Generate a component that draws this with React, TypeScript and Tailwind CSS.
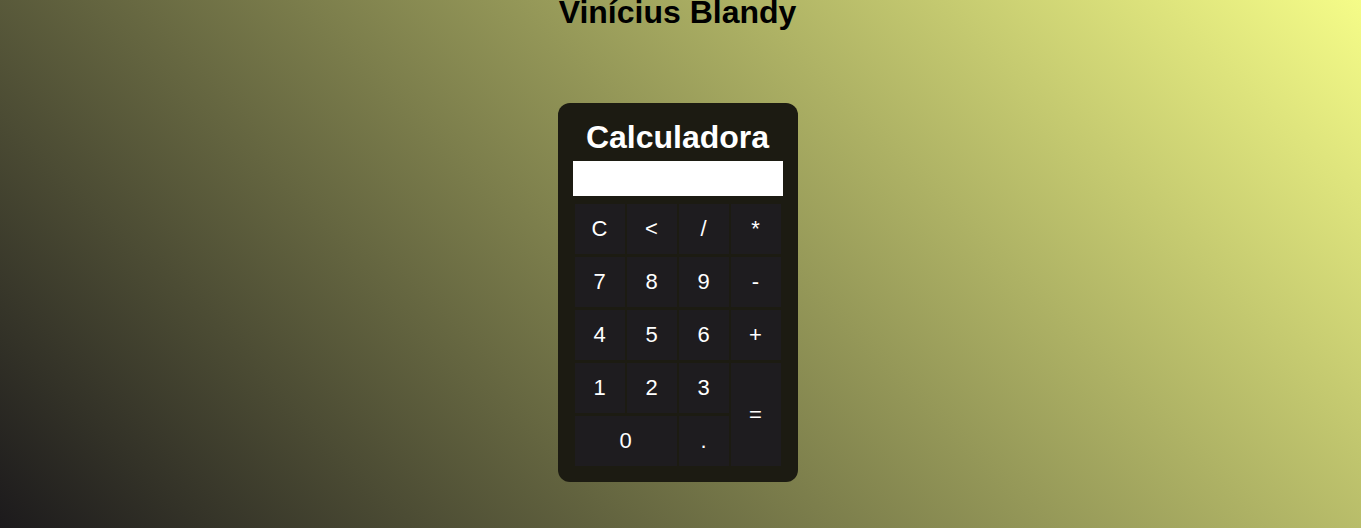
import React from 'react';

const keys: { label: string; span?: string }[] = [
  { label: 'C' },
  { label: '<' },
  { label: '/' },
  { label: '*' },
  { label: '7' },
  { label: '8' },
  { label: '9' },
  { label: '-' },
  { label: '4' },
  { label: '5' },
  { label: '6' },
  { label: '+' },
  { label: '1' },
  { label: '2' },
  { label: '3' },
  { label: '=', span: 'row-span-2' },
  { label: '0', span: 'col-span-2' },
  { label: '.' },
];

const App: React.FC = () => {
  return (
    <div className="h-[528px] overflow-hidden bg-[linear-gradient(45deg,#1c1a1c,#f5fc88)] font-['Liberation_Sans',Arial,sans-serif]">
      <div className="flex flex-col items-center pr-[6px]">
        <h1 className="mt-[-6px] text-[32px] font-bold leading-[1.15] text-black">Vinícius Blandy</h1>

        {/* Calculator */}
        <div className="mt-[72px] w-[240px] rounded-xl bg-[#1c1b12] px-[15px] pt-[16px] pb-[16px]">
          <h2 className="text-center text-[32px] font-bold leading-[1.15] text-white">Calculadora</h2>
          <input type="text" readOnly className="mt-[5px] block h-[35px] w-[210px] bg-white outline-none" />
          <div className="mx-auto mt-[8px] grid w-[206px] grid-cols-[repeat(4,50px)] grid-rows-[repeat(5,50px)] gap-x-[2px] gap-y-[3px]">
            {keys.map((k) => (
              <button
                key={k.label}
                className={`${k.span ?? ''} flex items-center justify-center bg-[#1e1c1f] text-[22px] text-white`}
              >
                {k.label}
              </button>
            ))}
          </div>
        </div>
      </div>
    </div>
  );
};

export default App;
